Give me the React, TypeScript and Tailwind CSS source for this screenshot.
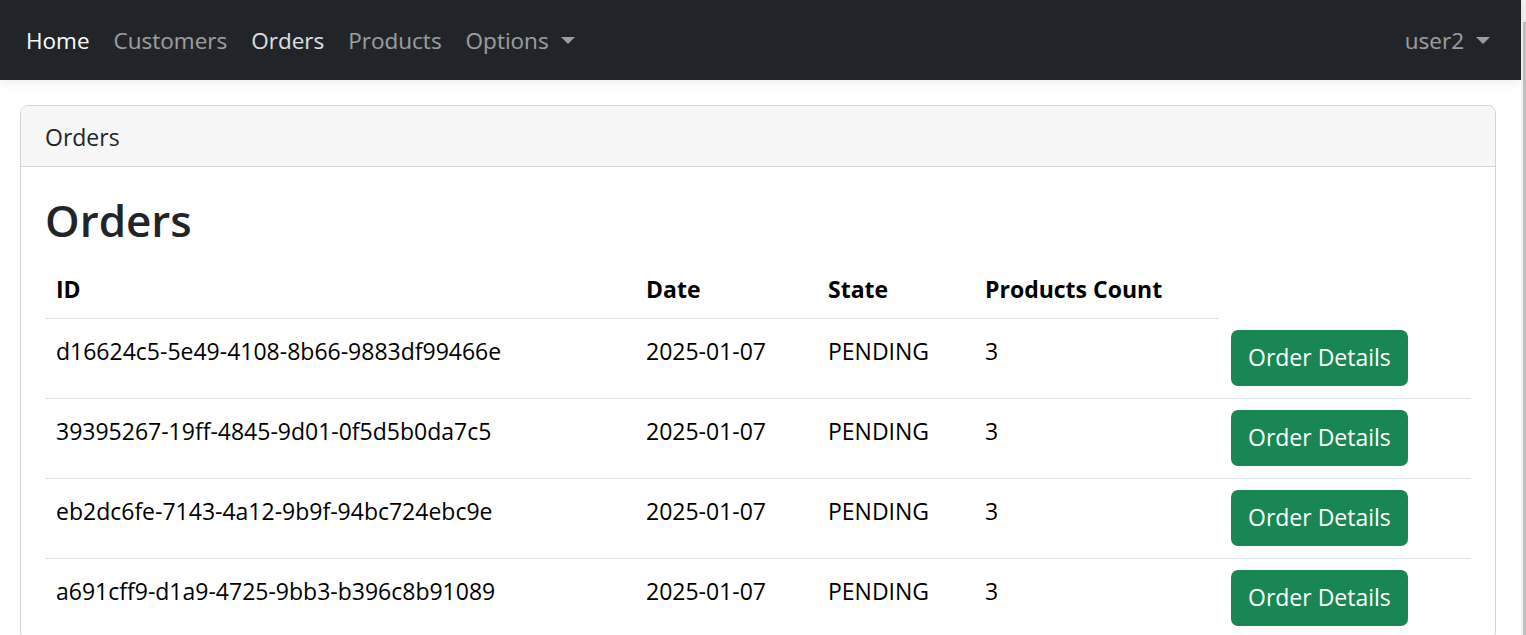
import React from 'react';

interface Order {
  id: string;
  date: string;
  state: string;
  count: number;
}

const ORDERS: Order[] = [
  { id: 'd16624c5-5e49-4108-8b66-9883df99466e', date: '2025-01-07', state: 'PENDING', count: 3 },
  { id: '39395267-19ff-4845-9d01-0f5d5b0da7c5', date: '2025-01-07', state: 'PENDING', count: 3 },
  { id: 'eb2dc6fe-7143-4a12-9b9f-94bc724ebc9e', date: '2025-01-07', state: 'PENDING', count: 3 },
  { id: 'a691cff9-d1a9-4725-9bb3-b396c8b91089', date: '2025-01-07', state: 'PENDING', count: 3 },
];

const Caret = () => (
  <span className="inline-block ml-[12px] align-[5px] w-0 h-0 border-t-[7px] border-t-current border-x-[7px] border-x-transparent" />
);

const navLink = 'px-[12px] py-[11px] leading-[35px]';
const th = 'font-bold px-[11px] py-[11px] border-b border-[#dee2e6]';
const td = 'px-[11px] pt-[15px] pb-[11px]';

export default function App() {
  return (
    <div className="flex w-[1526px] h-[635px] overflow-hidden bg-white text-[23px] font-['Open_Sans',sans-serif] text-[#212529]">
      <div className="flex-1 min-w-0">
        {/* Navbar */}
        <nav className="relative z-10 h-[80px] bg-[#212529] flex items-center pl-[14px] pr-[19px] pt-[1px] text-[22.5px] shadow-[0_3px_10px_rgba(0,0,0,0.07)]">
          <a className={`${navLink} text-white`}>Home</a>
          <a className={`${navLink} text-white/55`}>Customers</a>
          <a className={`${navLink} text-white/85`}>Orders</a>
          <a className={`${navLink} text-white/55`}>Products</a>
          <a className={`${navLink} text-white/55`}>
            Options
            <Caret />
          </a>
          <a className={`${navLink} text-white/55 ml-auto`}>
            user2
            <Caret />
          </a>
        </nav>

        {/* Card */}
        <div className="pl-[20px] pr-[25px] pt-[25px]">
          <div className="border border-[#d3d3d4] rounded-[8px] overflow-hidden">
            <div className="bg-[#f7f7f7] border-b border-[#d3d3d4] px-[24px] pt-[14px] pb-[11px] leading-[35px]">Orders</div>
            <div className="px-[24px] pt-[23px]">
              <h1 className="text-[44px] font-semibold leading-[60px] mb-[11px]">Orders</h1>
              <table className="w-full table-fixed border-collapse text-black leading-[35px]">
                <colgroup>
                  <col className="w-[590px]" />
                  <col className="w-[182px]" />
                  <col className="w-[157px]" />
                  <col className="w-[245px]" />
                  <col />
                </colgroup>
                <thead>
                  <tr className="text-left">
                    <th className={th}>ID</th>
                    <th className={th}>Date</th>
                    <th className={th}>State</th>
                    <th className={th}>Products Count</th>
                  </tr>
                </thead>
                <tbody>
                  {ORDERS.map((o) => (
                    <tr key={o.id} className="border-b border-[#dee2e6] align-top">
                      <td className={td}>{o.id}</td>
                      <td className={td}>{o.date}</td>
                      <td className={td}>{o.state}</td>
                      <td className={td}>{o.count}</td>
                      <td className="px-[12px] pt-[11px] pb-[12px]">
                        <button className="h-[56px] px-[17px] bg-[#198754] text-white rounded-[7px] leading-[35px]">
                          Order Details
                        </button>
                      </td>
                    </tr>
                  ))}
                </tbody>
              </table>
            </div>
          </div>
        </div>
      </div>

      {/* Scrollbar */}
      <div className="w-[5px] h-full bg-[#f1f1f1] flex flex-col pt-[22px] pl-[2px]">
        <div className="flex-1 bg-[#c1c1c1]" />
      </div>
    </div>
  );
}
